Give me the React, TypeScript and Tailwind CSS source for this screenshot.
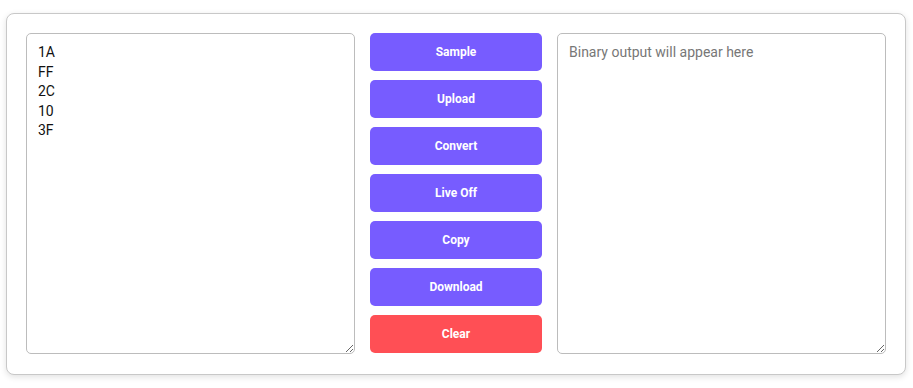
import { useState } from "react";

const actions = ["Sample", "Upload", "Convert", "Live Off", "Copy", "Download"];

const App = () => {
  const [input, setInput] = useState("1A\nFF\n2C\n10\n3F");
  const [output, setOutput] = useState("");

  return (
    <div className="min-h-screen bg-white font-['Roboto',sans-serif]">
      <div className="ml-[6px] mt-[13px] w-[900px] rounded-lg border border-[#c8c8c8] bg-white px-[19px] pt-[19px] pb-[20px] shadow-[0_2px_6px_rgba(0,0,0,0.12)]">
        <div className="flex gap-[15px]">
          <textarea
            value={input}
            onChange={(e) => setInput(e.target.value)}
            className="h-[321px] w-[329px] rounded-[5px] border border-[#bcbcbc] px-[11px] pt-[9px] pb-[10px] text-[14px] leading-[19.5px] text-[#111] outline-none"
          />
          <div className="flex w-[172px] flex-col gap-[9px]">
            {actions.map((a) => (
              <button
                key={a}
                className="h-[38px] rounded-[5px] bg-[#775cff] text-[12px] font-bold text-white"
              >
                {a}
              </button>
            ))}
            <button
              onClick={() => {
                setInput("");
                setOutput("");
              }}
              className="h-[38px] rounded-[5px] bg-[#ff4f55] text-[12px] font-bold text-white"
            >
              Clear
            </button>
          </div>
          <textarea
            value={output}
            onChange={(e) => setOutput(e.target.value)}
            placeholder="Binary output will appear here"
            className="h-[321px] w-[329px] rounded-[5px] border border-[#bcbcbc] px-[11px] pt-[9px] pb-[10px] text-[14px] leading-[19.5px] text-[#111] outline-none placeholder:text-[#777]"
          />
        </div>
      </div>
    </div>
  );
};

export default App;
